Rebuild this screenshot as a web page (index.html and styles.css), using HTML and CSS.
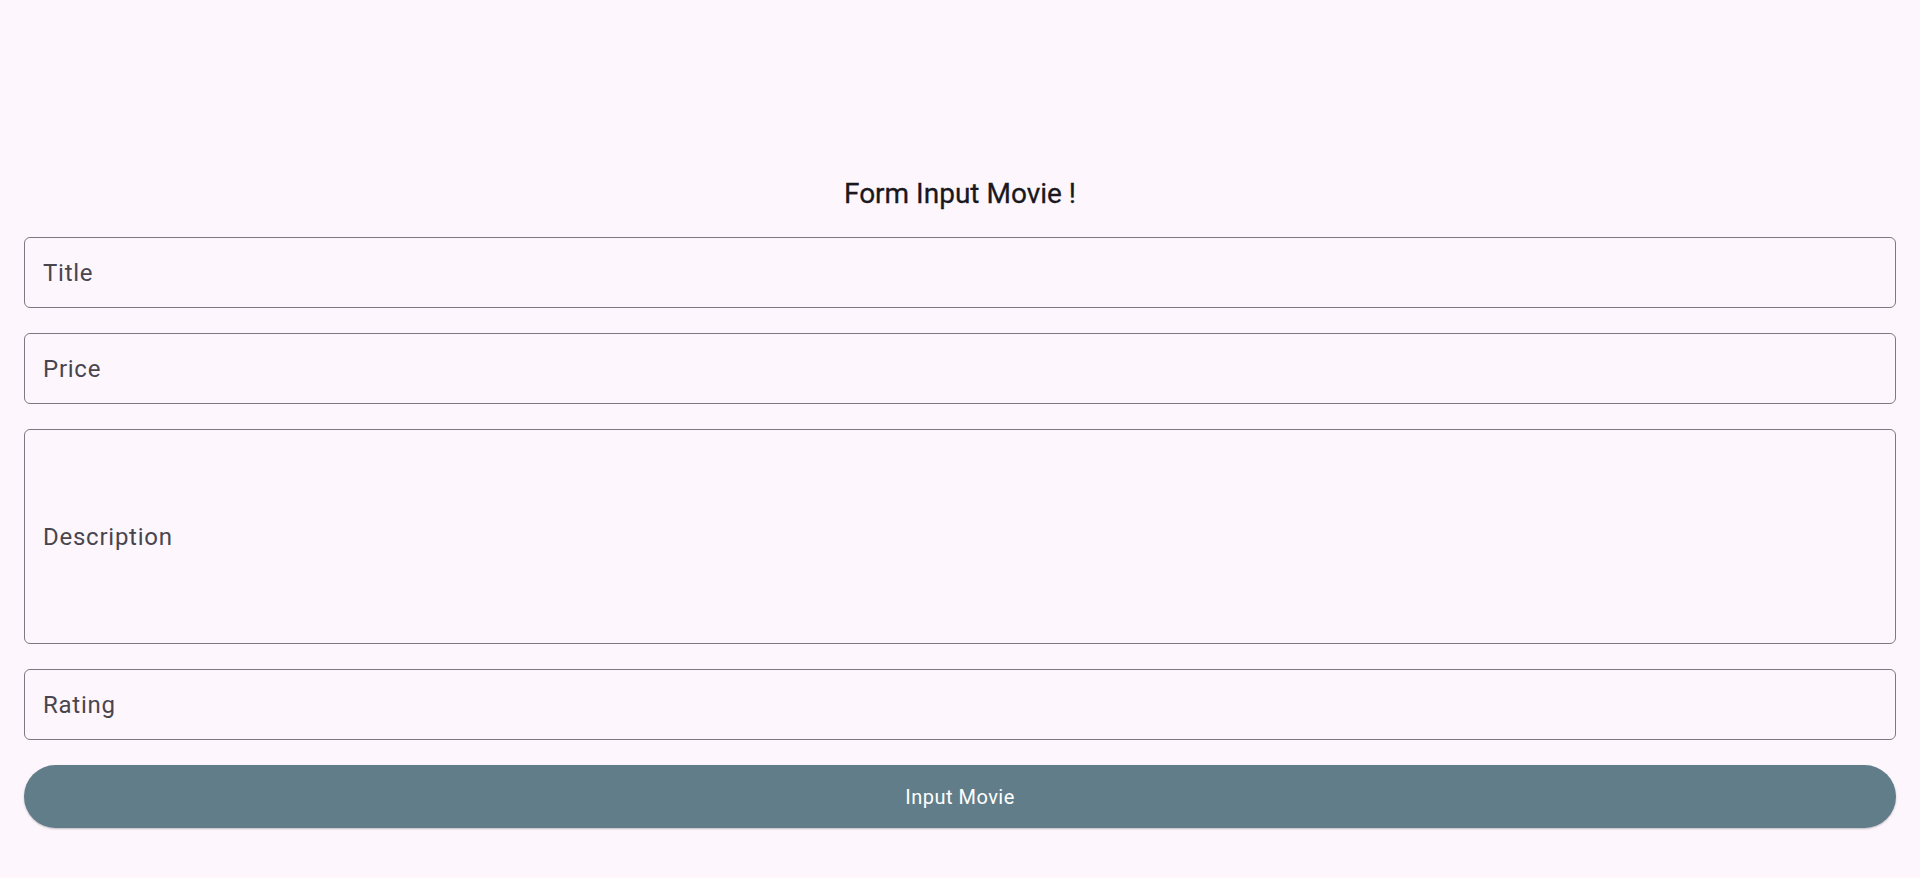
FILE: index.html
```html
<!DOCTYPE html>
<html>
<head>
<meta charset="utf-8">
<link rel="stylesheet" href="styles.css">
</head>
<body>
<main class="page">
  <h1 class="heading">Form Input Movie !</h1>
  <form class="form">
    <label class="field"><span class="label">Title</span></label>
    <label class="field"><span class="label">Price</span></label>
    <label class="field field-tall"><span class="label">Description</span></label>
    <label class="field"><span class="label">Rating</span></label>
    <button type="button" class="submit">Input Movie</button>
  </form>
</main>
</body>
</html>
```

FILE: styles.css
```css
html, body {
  margin: 0;
  padding: 0;
  background: #fdf7fd;
  font-family: Roboto, "Liberation Sans", sans-serif;
}

.page {
  display: flex;
  flex-direction: column;
  align-items: stretch;
  padding: 177px 24px 0 24px;
  height: 878px;
  box-sizing: border-box;
}

.heading {
  margin: 0 0 27px 0;
  text-align: center;
  font-size: 28px;
  line-height: 33px;
  font-weight: 400;
  color: #1a181d;
  -webkit-text-stroke: 0.3px #1a181d;
}

.form {
  display: flex;
  flex-direction: column;
  gap: 25px;
}

.field {
  display: flex;
  align-items: center;
  height: 71px;
  box-sizing: border-box;
  border: 1.3px solid #7d7881;
  border-radius: 6px;
  padding: 0 18px;
}

.field-tall {
  height: 215px;
}

.label {
  font-size: 24px;
  letter-spacing: 0.75px;
  color: #49454f;
  font-weight: 400;
  padding-top: 1px;
}

.submit {
  height: 63px;
  border: none;
  border-radius: 32px;
  background: #617d8a;
  color: #ffffff;
  font-family: Roboto, "Liberation Sans", sans-serif;
  font-size: 20px;
  font-weight: 400;
  letter-spacing: 0.5px;
  box-shadow: 0 1px 2px rgba(0, 0, 0, 0.25);
  cursor: pointer;
}
```
